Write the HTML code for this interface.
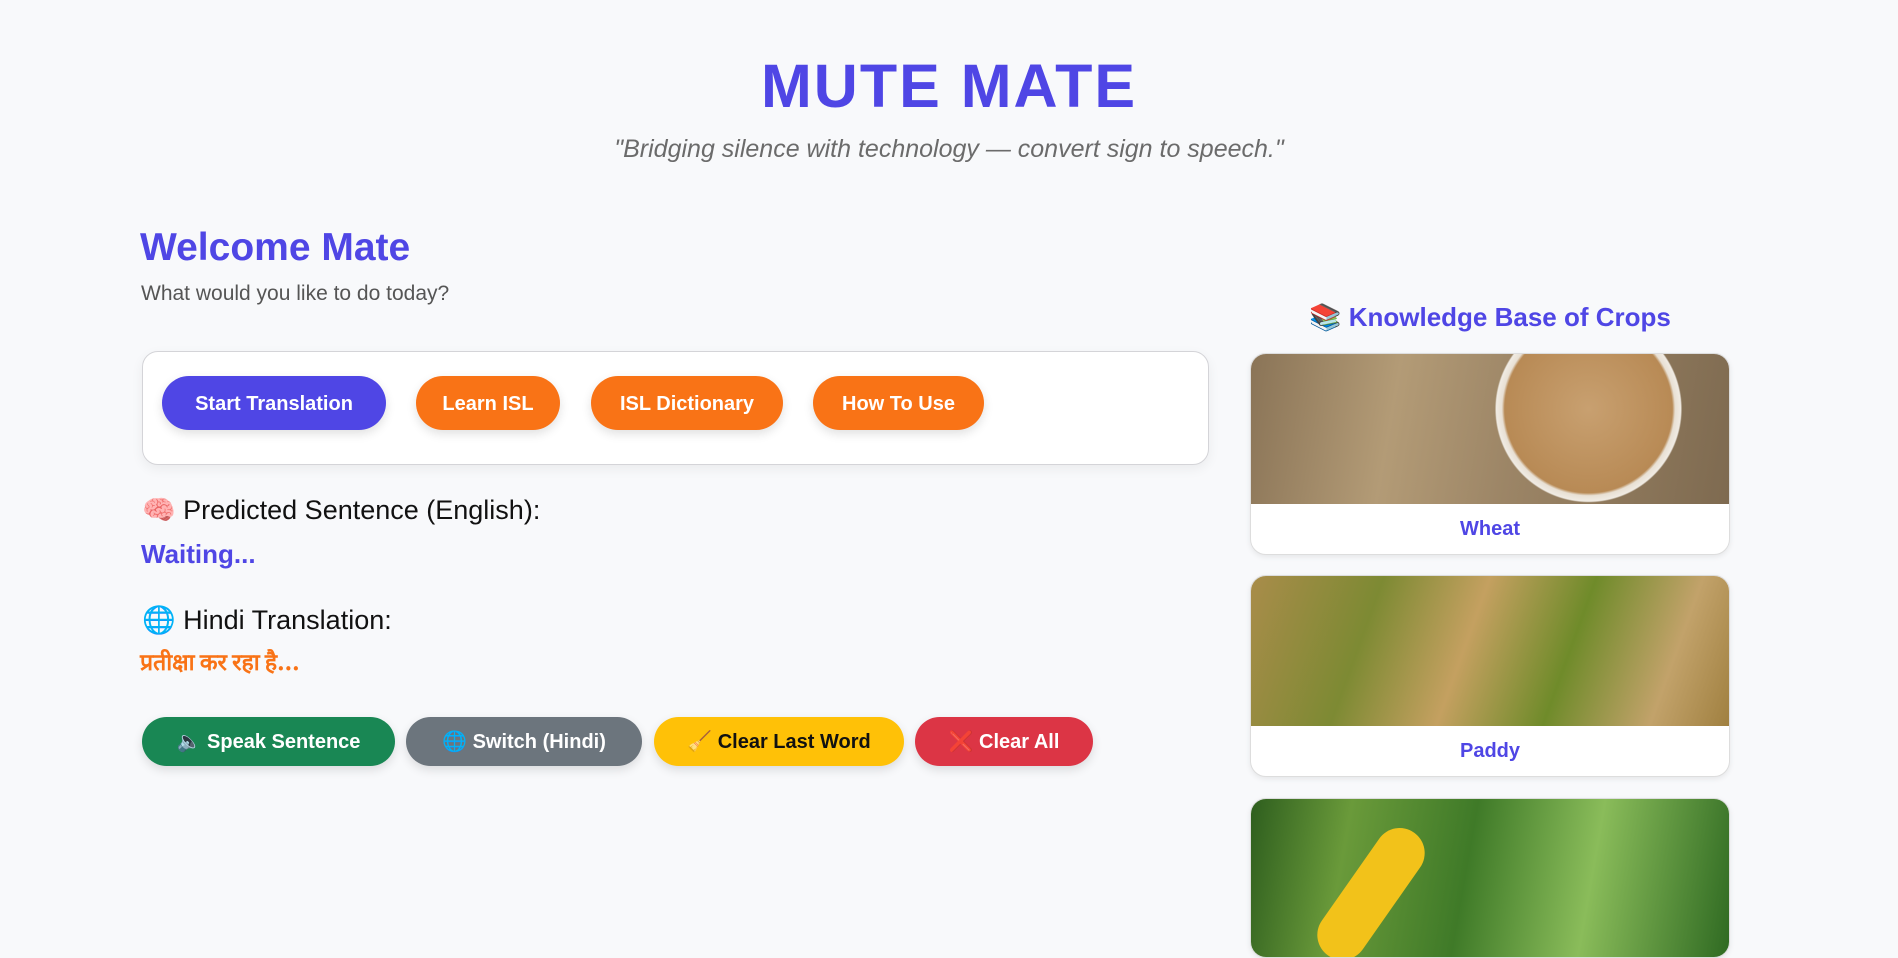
<!DOCTYPE html>
<html><head><meta charset="utf-8"><style>
*{box-sizing:border-box;margin:0;padding:0}
body{width:1898px;height:926px;overflow:hidden;background:#f8f9fb;font-family:"Liberation Sans","Noto Sans CJK SC",sans-serif;position:relative}
.a{position:absolute}
h1{position:absolute;left:0;width:1898px;top:51px;text-align:center;font-size:61px;letter-spacing:2px;color:#4f46e5;font-weight:bold}
.sub{left:0;width:1898px;top:135px;text-align:center;font-size:25px;font-style:italic;color:#6b6b6b}
.btn{position:absolute;border-radius:28px;color:#fff;font-weight:bold;font-size:20px;display:flex;align-items:center;justify-content:center;box-shadow:0 4px 10px rgba(0,0,0,.12)}
.card{position:absolute;left:1250px;width:480px;border-radius:16px;background:#fff;border:1px solid #ddd;overflow:hidden;box-shadow:0 2px 6px rgba(0,0,0,.08)}
.cap{height:50px;display:flex;align-items:center;justify-content:center;color:#4f46e5;font-weight:bold;font-size:20px}
</style></head><body>
<h1>MUTE MATE</h1>
<div class="a sub">"Bridging silence with technology — convert sign to speech."</div>
<div class="a" style="left:140px;top:226px;font-size:39px;font-weight:bold;color:#4f46e5">Welcome Mate</div>
<div class="a" style="left:141px;top:282px;font-size:21px;color:#555">What would you like to do today?</div>
<div class="a" style="left:142px;top:351px;width:1067px;height:114px;background:#fff;border:1px solid #d4d4d8;border-radius:16px;box-shadow:0 4px 12px rgba(0,0,0,.06)"></div>
<div class="btn" style="left:162px;top:376px;width:224px;height:54px;background:#4f46e5;padding-top:3px">Start Translation</div>
<div class="btn" style="left:416px;top:376px;width:144px;height:54px;background:#f97316;padding-top:3px">Learn ISL</div>
<div class="btn" style="left:591px;top:376px;width:192px;height:54px;background:#f97316;padding-top:3px">ISL Dictionary</div>
<div class="btn" style="left:813px;top:376px;width:171px;height:54px;background:#f97316;padding-top:3px">How To Use</div>
<div class="a" style="left:142px;top:494px;font-size:27px;color:#111">🧠 Predicted Sentence (English):</div>
<div class="a" style="left:141px;top:539px;font-size:26px;font-weight:bold;color:#4f46e5">Waiting...</div>
<div class="a" style="left:142px;top:604px;font-size:27px;color:#111">🌐 Hindi Translation:</div>
<div class="a" style="left:140px;top:643px;font-size:23px;font-weight:bold;color:#f97316;font-family:'Noto Sans CJK SC',sans-serif">प्रतीक्षा कर रहा है...</div>
<div class="btn" style="left:142px;top:717px;width:253px;height:49px;background:#198754">🔈 Speak Sentence</div>
<div class="btn" style="left:406px;top:717px;width:236px;height:49px;background:#6c757d">🌐 Switch (Hindi)</div>
<div class="btn" style="left:654px;top:717px;width:250px;height:49px;background:#ffc107;color:#111">🧹 Clear Last Word</div>
<div class="btn" style="left:915px;top:717px;width:178px;height:49px;background:#dc3545">❌ Clear All</div>
<div class="a" style="left:1250px;width:480px;top:302px;text-align:center;font-size:26px;font-weight:bold;color:#4f46e5">📚 Knowledge Base of Crops</div>
<div class="card" style="top:353px;height:202px">
<div style="height:150px;background:linear-gradient(100deg,#8a7457,#b39b76 30%,#9c8566 55%,#7e6a50);position:relative">
<div class="a" style="left:235px;top:-40px;width:205px;height:190px;border-radius:50%;background:radial-gradient(circle,#c8a070 0,#b88a55 60%,#e8e0d4 62%,#f0ebe3 66%,transparent 67%)"></div>
</div><div class="cap">Wheat</div></div>
<div class="card" style="top:575px;height:202px">
<div style="height:150px;background:linear-gradient(110deg,#a98c4a,#7d8a33 25%,#c4a060 45%,#6f8b2a 65%,#c2a26a 85%,#a08040)"></div>
<div class="cap">Paddy</div></div>
<div class="card" style="top:798px;height:160px">
<div style="height:160px;background:linear-gradient(100deg,#2e5e1e,#6a9a3a 20%,#3f7a28 45%,#8abc5a 70%,#2f6a22);position:relative">
<div class="a" style="left:95px;top:20px;width:50px;height:150px;border-radius:25px;background:#f2c21a;transform:rotate(35deg)"></div>
</div></div>
</body></html>
